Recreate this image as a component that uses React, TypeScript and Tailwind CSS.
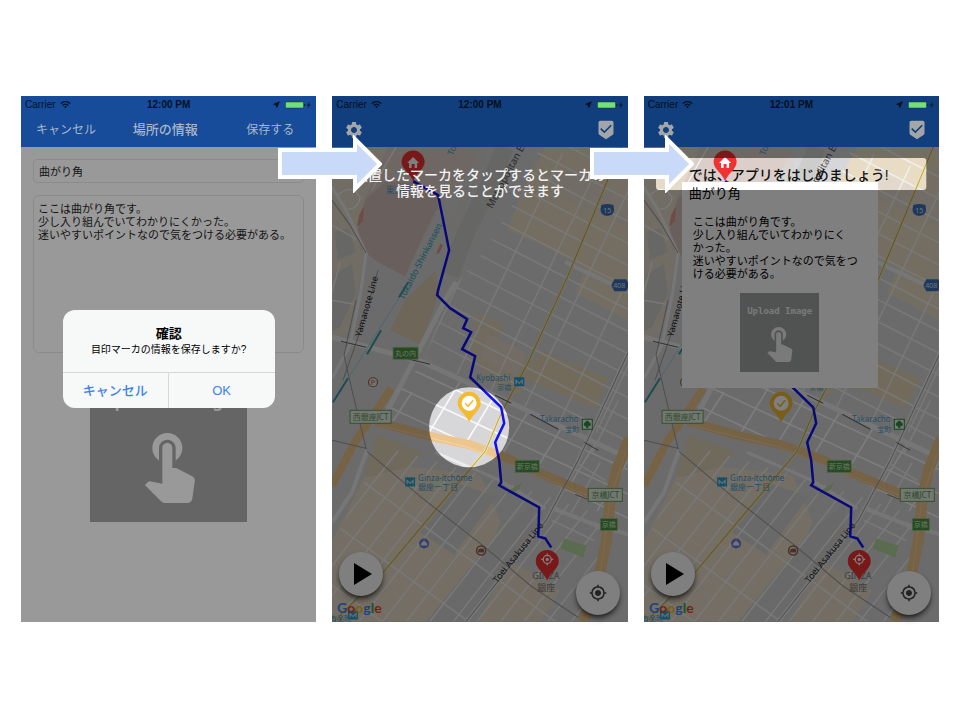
import type { ReactNode } from "react";
import {
  MdBeenhere,
  MdMyLocation,
  MdNearMe,
  MdSettings,
  MdWifi,
} from "react-icons/md";

const JP =
  "font-['Liberation_Sans','Noto_Sans_CJK_JP',sans-serif]";

/* Parallel streets: n lines along (dx, dy), each shifted by (sx, sy). */
function streets(
  x: number,
  y: number,
  dx: number,
  dy: number,
  sx: number,
  sy: number,
  n: number,
) {
  return Array.from(
    { length: n },
    (_, i) => `M${x + sx * i} ${y + sy * i}l${dx} ${dy}`,
  ).join("");
}

function StatusBar({ time }: { time: string }) {
  return (
    <div className="grid h-[17px] grid-cols-3 items-center px-1 text-[10px] text-black/80">
      <span className="flex items-center gap-1">
        Carrier <MdWifi size={11} />
      </span>
      <span className="text-center font-bold">{time}</span>
      <span className="flex items-center justify-end gap-1">
        <MdNearMe size={9} />
        <svg width="27" height="8" viewBox="0 0 26 8" aria-hidden="true">
          <rect x="0" y="1" width="18" height="6" rx="1" fill="#74e07a" stroke="#163a2b" strokeWidth="0.5" />
          <rect x="18.5" y="3" width="1.2" height="2" fill="#0a1f3c" />
          <path d="M24.500 0.500L21 4.500h2L22 7.500l3.500-4h-2z" fill="#0a1f3c" />
        </svg>
      </span>
    </div>
  );
}

function TouchIcon({ className }: { className: string }) {
  return (
    <svg viewBox="4 3 16 21" className={className} fill="currentColor" aria-hidden="true">
      <path d="M9 11.24V7.5C9 6.12 10.12 5 11.5 5S14 6.12 14 7.5v3.74c1.21-.81 2-2.18 2-3.74C16 5.01 13.99 3 11.5 3S7 5.01 7 7.5c0 1.56.79 2.93 2 3.74zm9.84 4.63l-4.54-2.26c-.17-.07-.35-.11-.54-.11H13v-6c0-.83-.67-1.5-1.5-1.5S10 6.67 10 7.5v10.74l-3.43-.72c-.08-.01-.15-.03-.24-.03-.31 0-.59.13-.79.33l-.79.8 4.94 4.94c.27.27.65.44 1.06.44h6.79c.75 0 1.33-.55 1.44-1.28l.75-5.27c.01-.07.02-.14.02-.2 0-.62-.38-1.16-.91-1.38z" />
    </svg>
  );
}

function Arrow() {
  return (
    <svg
      width="104"
      height="58"
      viewBox="0 0 104 58"
      className="absolute top-[39px] -left-[54px] z-20"
      aria-hidden="true"
    >
      <path
        d="M2 15H77V4L102 29L77 54V42H2z"
        fill="#c9daf8"
        stroke="#fff"
        strokeWidth="4"
      />
    </svg>
  );
}

function Pin({ x, y, color, children }: { x: number; y: number; color: string; children: ReactNode }) {
  return (
    <g transform={`translate(${x} ${y})`}>
      <path d="M0 0C-3 -8 -11.500 -12 -11.500 -19A11.500 11.500 0 0 1 11.500 -19C11.500 -12 3 -8 0 0z" fill={color} />
      {children}
    </g>
  );
}

function HomePin() {
  return (
    <Pin x={413} y={181} color="#f03232">
      <path d="M-6 -18L0 -24L6 -18H4V-13H1.500V-17H-1.500V-13H-4V-18z" fill="#fff" />
    </Pin>
  );
}

function Sign({ x, y, w, text }: { x: number; y: number; w: number; text: string }) {
  return (
    <g>
      <rect x={x} y={y} width={w} height="12" fill="#4c9440" stroke="#9cc490" strokeWidth="0.8" />
      <text x={x + w / 2} y={y + 9} fontSize="7" fill="#d8efd8" textAnchor="middle">{text}</text>
    </g>
  );
}

function Junction({ x, y, w, text }: { x: number; y: number; w: number; text: string }) {
  return (
    <g>
      <rect x={x} y={y} width={w} height="13" fill="#e4eee0" stroke="#6f9f68" strokeWidth="1" />
      <text x={x + w / 2} y={y + 10} fontSize="8" fill="#5c9455" textAnchor="middle">{text}</text>
    </g>
  );
}

function Metro({ x, y }: { x: number; y: number }) {
  return (
    <g transform={`translate(${x} ${y})`}>
      <rect width="10" height="9" fill="#2c9fd0" />
      <path d="M2 7V3L5 6L8 3V7" fill="none" stroke="#d5effa" strokeWidth="1" />
    </g>
  );
}

function MapArt({ id }: { id: string }) {
  return (
    <>
      <defs>
        <clipPath id={`${id}-north`}>
          <path d="M515 200L540 147H628V455L501 395L424 358L452 288L485 250z" />
        </clipPath>
        <clipPath id={`${id}-mid`}>
          <path d="M386 405L421 364L501 401L628 461V530L520 462L392 428z" />
        </clipPath>
        <clipPath id={`${id}-south`}>
          <path d="M332 621V545L382 446L480 474L560 500L612 520L590 621z" />
        </clipPath>
      </defs>
      <rect x="332" y="147" width="296" height="476" fill="#d7d7d9" />

      {/* districts */}
      <path d="M332 147H394L362 215L363 260L350 330L332 345z" fill="#e4dbc9" />
      <path d="M334 275l18-12 4 30-16 34-8 4zM334 232l14-4 8 24-18 8z" fill="#cfcfcd" />
      <path d="M388 147H486L462 180L441 205L425 235L405 276L378 262L357 233L364 200z" fill="#dccfc9" />
      <path d="M365 200L357 233L362 250L378 262L405 276L422 238L441 200L420 183L385 182z" fill="#d2c1bd" />
      <path d="M364 206l-5 9-2 12 6-6zM440 244l-4 10 3-1 4-8z" fill="#dd9a92" />
      <path d="M545 147H628V320L590 300L545 278L497 262L510 225L522 190z" fill="#e8dcc4" />
      <path d="M503 228l40 18 42 22-10 24-40-16-46-16z" fill="#d7d7d9" />
      <path d="M566 168l60 28v30l-72-32z" fill="#e2d9cc" />
      <path d="M405 300L436 270L438 296L421 345L390 330z" fill="#dccdb0" />
      <path d="M475 312l30 12-7 24 34 12-12 36-34-16-14-28z" fill="#e0d4be" />
      <path d="M488 334l38 18-10 24-36-17z" fill="#e5d8ca" />
      <path d="M540 350l68 28-14 30-70-30z" fill="#e4d5b6" />
      <path d="M332 540L372 462L480 475L500 520L470 621H332z" fill="#e8dcc8" />
      <path d="M460 484l36 12-42 58-34-22z" fill="#d2d2d5" />
      <path d="M500 530l34-28-4 42-62 77h-42z" fill="#d2d2d5" />
      <path d="M510 560l50 30-20 31h-62z" fill="#e6dac6" />
      <path d="M377 434l46 18-12 14-48 12z" fill="#e0d4ba" />

      {/* minor streets */}
      <g fill="none" stroke="#f0f0ee">
        <g clipPath={`url(#${id}-north)`}>
          <path d={streets(400, 60, 320, 165, 0, 22, 20)} strokeWidth="1.500" />
          <path d={streets(490, 130, -110, 230, 36, 12, 8)} strokeWidth="1.500" />
        </g>
        <g clipPath={`url(#${id}-mid)`} stroke="#fafafa">
          <path d={streets(370, 350, 280, 130, 0, 24, 6)} strokeWidth="1.600" />
          <path d={streets(470, 365, -55, 90, 34, 15, 6)} strokeWidth="1.600" />
          <path d="M412 392l-20 30" strokeWidth="1.600" />
        </g>
        <g clipPath={`url(#${id}-south)`}>
          <path d={streets(250, 640, 160, -205, 22, 2, 18)} strokeWidth="1.600" />
          <path d={streets(320, 450, 330, 240, -18, 50, 5)} strokeWidth="1.600" />
        </g>
        <path d="M332 225l24 14M338 195q14 -12 22 2q-2 12 -12 12M332 300l22 4M340 262l-8 30M372 190l14 -26l10 -17M332 165l40 6" strokeWidth="1.500" />
        <path d="M555 507l50 24M552 520l42 20M575 462l30 18M600 462l-30 52M590 440l30 14M618 400l-26 52" strokeWidth="1.600" />
      </g>

      {/* main roads */}
      <g fill="none" stroke="#ededee" strokeLinejoin="round">
        <path d="M456 282L445 300L385 415" strokeWidth="5" />
        <path d="M332 337L380 350L421 361L501 398L628 458" strokeWidth="5" />
        <path d="M332 187L346 210L366 253L361 290L350 345L332 378" strokeWidth="3" />
        <path d="M628 352L577 462L546 520L466 621" strokeWidth="4" />
        <path d="M367 450L352 492L332 522" strokeWidth="4" />
        <path d="M552 508L594 524L628 534" strokeWidth="4" />
        <path d="M565 262L628 292" strokeWidth="4" />
        <path d="M435 452L500 480L545 508" strokeWidth="3" />
      </g>
      <path d="M505 147L484 196L466 232L450 275" fill="none" stroke="#cdcdcb" strokeWidth="18" />
      <path d="M484 147L468 190L448 240" fill="none" stroke="#d8d4d0" strokeWidth="8" />

      {/* parks */}
      <path d="M564 538l22 7-3 12-23-9zM511 489l11-7-4 8-13 4z" fill="#b5d6a0" />

      {/* expressways */}
      <g fill="none" stroke="#ecc68c" strokeLinejoin="round">
        <path d="M391 388L378 408L356 440L332 485" strokeWidth="8" />
        <path d="M376 421L430 436L468 444L505 457L545 475L590 494L612 498" strokeWidth="9" />
        <path d="M629 438L616 470L610 498L606 540L600 570L583 621" strokeWidth="11" />
      </g>
      <path
        d="M378 425L468 447L545 478L590 496M626 450L610 498L601 566L586 621"
        fill="none"
        stroke="#f3d5a4"
        strokeWidth="1"
      />

      {/* national road */}
      <path d="M621 147L568 275L528 362L501 413L485 451L383 572L334 621" fill="none" stroke="#ede3ae" strokeWidth="3" />
      <path d="M621 147L568 275L528 362L501 413L485 451L383 572L334 621" fill="none" stroke="#bfa753" strokeWidth="1" />

      {/* railways */}
      <g fill="none" stroke="#9c9c9c" strokeWidth="1">
        <path d="M367 451L420 496L485 547L530 585L578 617" />
        <path d="M332 440L366 448L352 390L344 355L356 300" />
        <path d="M628 352L577 462L546 520L466 621M343 380L364 320L378 270" />
        <path d="M341 341L366 347M405 358L430 364M495 395l16 8M530 414L558 429M584 442L598 450M575 494L590 500" stroke="#666" />
        <path d="M332 200L350 225L366 253" />
      </g>
      <path d="M445 218L405 288L333 402" fill="none" stroke="#9ccfd6" strokeWidth="1" />
      <path d="M408 282l-9 15M381 330l-14 24M348 378l-15 24" fill="none" stroke="#3b97a4" strokeWidth="2" />

      {/* road and place labels */}
      <g fontFamily="'Noto Sans', 'Noto Sans CJK JP', sans-serif">
        <text transform="translate(361 337) rotate(-74)" fontSize="9" fill="#222">Yamanote Line</text>
        <text transform="translate(404 300) rotate(-63)" fontSize="9" fill="#3a9fb4">Tokaido Shinkansen</text>
        <text transform="translate(492 209) rotate(-62)" fontSize="10" fill="#555">Metropolitan Expwy</text>
        <text transform="translate(453 156) rotate(-70)" fontSize="9" fill="#3a9fb4">Tokyo</text>
        <text transform="translate(497 583) rotate(-51)" fontSize="9" fill="#222">Toei Asakusa Line</text>
        <g fill="#4a9cc8" fontSize="8">
          <text x="386" y="193" fontSize="8">東京駅</text>
          <text x="476" y="381">Kyobashi</text>
          <text x="497" y="390" fontSize="7">京橋</text>
          <text x="540" y="422">Takaracho</text>
          <text x="565" y="432" fontSize="7">宝町</text>
          <text x="418" y="481">Ginza-itchōme</text>
          <text x="418" y="490" fontSize="8">銀座一丁目</text>
          <text x="330" y="620" fontSize="7">有楽町</text>
        </g>
        <text x="532" y="579" fontSize="9" fill="#777">GINZA</text>
        <text x="537" y="591" fontSize="9" fill="#777">銀座</text>
        <Sign x={393} y={347} w={25} text="丸の内" />
        <Sign x={515} y={460} w={24} text="新京橋" />
        <Sign x={600} y={518} w={17} text="京橋" />
        <Junction x={350} y={410} w={41} text="西銀座JCT" />
        <Junction x={588} y={488} w={34} text="京橋JCT" />
        <path d="M601 205q6-2 12 0q3 10-6 11q-9-1-6-11z" fill="#3f6fb5" />
        <text x="607" y="213" fontSize="7" fill="#dbe6f5" textAnchor="middle">15</text>
        <path d="M614 279h12l3 6-3 6h-12l-3-6z" fill="#3f6fb5" />
        <text x="619" y="288" fontSize="7" fill="#dbe6f5" textAnchor="middle">408</text>
      </g>
      <Metro x={514} y={377} />
      <Metro x={405} y={477} />
      <Metro x={348} y={610} />
      <rect x="582" y="419" width="10" height="10" fill="#e9f5e9" stroke="#2f8a3f" />
      <path d="M586.500 427.500v-2h-1a1.500 1.500 0 0 1 0-3a1.500 1.500 0 0 1 3 0a1.500 1.500 0 0 1 0 3h-1v2z" fill="#2f8a3f" stroke="#2f8a3f" />
      <circle cx="373" cy="382" r="4.500" fill="#f2e6dd" stroke="#8e6453" strokeWidth="1.200" />
      <text x="373" y="385" fontSize="7" fill="#8e6453" textAnchor="middle" fontFamily="Roboto, sans-serif">P</text>
      <circle cx="424" cy="543" r="5" fill="#6a7fd0" />
      <path d="M421 545v-2l3-3 3 3v2z" fill="#e5eaff" />
      <circle cx="481" cy="550" r="4.500" fill="#f2e6dd" stroke="#8e6453" strokeWidth="1.500" />
      <path d="M478 552v-3l2-1h3l1 1v3z" fill="#8e6453" />

      {/* walking route */}
      <path
        d="M413 181L438 195L449 250L438 290L437 295L450 308L467 319L463 328L471 332L462 349L475 356L470 377L501 407L504 423L495 442L499 460L501 482L499 485L539 507L538 536L545 538L551 547"
        fill="none"
        stroke="#1010f0"
        strokeWidth="2.500"
      />

      <Pin x={547} y={580} color="#f03232">
        <circle cy="-21" r="4" fill="none" stroke="#fff" strokeWidth="1.300" />
        <circle cy="-21" r="1.600" fill="#fff" />
        <path d="M0 -27v2M0 -17v2M-6 -21h2M4 -21h2" stroke="#fff" strokeWidth="1.200" />
      </Pin>
      <Pin x={469} y={422} color="#f2bb30">
        <circle cy="-19" r="7.500" fill="#fff" />
        <path d="M-4 -19L-1 -16L4 -22" fill="none" stroke="#f2bb30" strokeWidth="1.500" />
      </Pin>

      <text x="337" y="613" fontSize="14" fontFamily="Lato, sans-serif" fontWeight="700">
        <tspan fill="#4285f4">G</tspan>
        <tspan fill="#ea4335">o</tspan>
        <tspan fill="#fbbc05">o</tspan>
        <tspan fill="#4285f4">g</tspan>
        <tspan fill="#34a853">l</tspan>
        <tspan fill="#ea4335">e</tspan>
      </text>
    </>
  );
}

const VIEW = "332 147 295 474";

function MapScreen({
  id,
  time,
  cutout,
  card,
  children,
}: {
  id: string;
  time: string;
  cutout: string;
  card?: ReactNode;
  children: ReactNode;
}) {
  return (
    <section className="relative min-w-0 flex-1">
      <Arrow />
      <header className="bg-[#113e7d]">
        <StatusBar time={time} />
        <div className="flex h-[34px] items-center justify-between px-3 text-[#a3a6a8]">
          <button type="button" aria-label="Settings">
            <MdSettings size={20} />
          </button>
          <button type="button" aria-label="Done">
            <MdBeenhere size={20} />
          </button>
        </div>
      </header>
      <div className="relative">
        <svg viewBox={VIEW} className="block h-auto w-full">
          <MapArt id={id} />
        </svg>
        {card}
        <button
          type="button"
          aria-label="Play"
          className="absolute bottom-[26px] left-[7px] flex size-11 items-center justify-center rounded-full bg-white shadow-md shadow-black/60"
        >
          <svg width="18" height="22" viewBox="0 0 18 22" className="ml-1">
            <path d="M0 0L18 11L0 22z" />
          </svg>
        </button>
        <button
          type="button"
          aria-label="Current location"
          className="absolute right-[8px] bottom-[7px] flex size-11 items-center justify-center rounded-full bg-white text-[#444] shadow-md shadow-black/60"
        >
          <MdMyLocation size={18} />
        </button>
        <svg viewBox={VIEW} className="pointer-events-none absolute inset-0 h-full w-full">
          <HomePin />
          <path d={`M331 146H629V623H331z${cutout}`} fillRule="evenodd" fill="#000" fillOpacity="0.500" />
        </svg>
        {children}
      </div>
    </section>
  );
}

function EditScreen() {
  return (
    <section className="relative flex min-w-0 flex-1 flex-col bg-[#999]">
      <header className="bg-[#164c99]">
        <StatusBar time="12:00 PM" />
        <div className="grid h-[34px] grid-cols-3 items-center pr-[22px] pl-[15px] text-xs text-[#a9b6c9]">
          <button type="button" className="justify-self-start">キャンセル</button>
          <h1 className="text-center text-[13px] font-medium">場所の情報</h1>
          <button type="button" className="justify-self-end">保存する</button>
        </div>
      </header>
      <form className="flex flex-col gap-3 px-3 pt-3 text-[11px] text-[#141414]">
        <label htmlFor="place" className="sr-only">場所</label>
        <input
          id="place"
          defaultValue="曲がり角"
          className="h-6 rounded border border-[#8b8b8b] bg-transparent px-[5px]"
        />
        <label htmlFor="memo" className="sr-only">メモ</label>
        <textarea
          id="memo"
          defaultValue={
            "ここは曲がり角です。\n少し入り組んでいてわかりにくかった。\n迷いやすいポイントなので気をつける必要がある。"
          }
          className="h-[158px] resize-none rounded-md border border-[#8b8b8b] bg-transparent px-1 pt-[7px] leading-[13px]"
        />
        <button
          type="button"
          className="flex h-[157px] w-[157px] flex-col items-center self-center bg-[#646564] pt-6 font-['DejaVu_Sans_Mono',monospace] text-lg leading-6 font-bold text-[#999]"
        >
          Upload Image
          <TouchIcon className="mt-5 h-[70px] w-[54px]" />
        </button>
      </form>
      <div
        role="dialog"
        aria-labelledby="confirm-title"
        className="absolute top-[214px] left-1/2 w-[212px] -translate-x-1/2 overflow-hidden rounded-xl bg-[#f7f8f8] text-center text-black"
      >
        <div className="h-[62px] pt-4">
          <h2 id="confirm-title" className="text-[13px] leading-4 font-bold">確認</h2>
          <p className="text-[10px] leading-4">目印マーカの情報を保存しますか?</p>
        </div>
        <div className="grid h-9 grid-cols-2 border-t border-[#d5d7d8] text-[13px] text-[#3d82ee]">
          <button type="button" className="border-r border-[#d5d7d8] font-medium">キャンセル</button>
          <button type="button">OK</button>
        </div>
      </div>
    </section>
  );
}

function InfoCard() {
  return (
    <article className="absolute top-[35px] left-[38px] flex h-[206px] w-[196px] flex-col bg-white px-[7px] pt-1 text-black">
      <h2 className="text-[13px] leading-4">曲がり角</h2>
      <p className="mt-[14px] pl-1 text-[11px] leading-[13px]">
        ここは曲がり角です。
        <br />
        少し入り組んでいてわかりにく
        <br />
        かった。
        <br />
        迷いやすいポイントなので気をつ
        <br />
        ける必要がある。
      </p>
      <div className="mt-3 flex size-[79px] flex-col items-center self-center bg-[#a3a5a4] pt-3 font-['DejaVu_Sans_Mono',monospace] text-[9px] leading-3 font-bold whitespace-nowrap text-[#f4f4f4]">
        Upload Image
        <TouchIcon className="mt-[10px] h-[35px] w-[27px]" />
      </div>
    </article>
  );
}

export default function App() {
  return (
    <main className={`min-h-screen bg-white px-[21px] pt-24 ${JP}`}>
      <div className="flex gap-4">
        <EditScreen />
        <MapScreen
          id="tap"
          time="12:00 PM"
          cutout="M429 427a40 40 0 1 0 80 0a40 40 0 1 0 -80 0z"
        >
          <p className="absolute inset-x-0 top-5 text-center text-sm leading-4 font-medium whitespace-nowrap text-[#f2f2f2]">
            設置したマーカをタップするとマーカの
            <br />
            情報を見ることができます
          </p>
        </MapScreen>
        <MapScreen
          id="start"
          time="12:01 PM"
          cutout="M347 158h264q3 0 3 3v26q0 3-3 3h-264q-3 0-3-3v-26q0-3 3-3z"
          card={<InfoCard />}
        >
          <p className="absolute top-5 left-[45px] text-sm leading-4 font-medium whitespace-nowrap text-[#111]">
            では、アプリをはじめましょう!
          </p>
        </MapScreen>
      </div>
    </main>
  );
}
